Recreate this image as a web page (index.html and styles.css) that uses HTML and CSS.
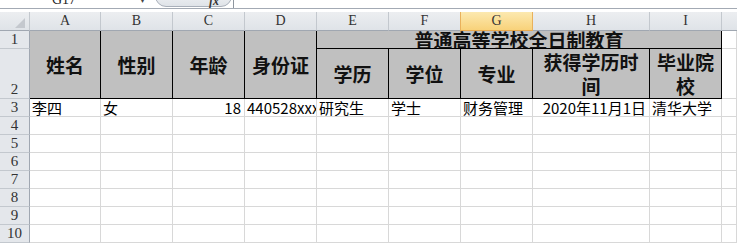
FILE: index.html
```html
<!DOCTYPE html>
<html lang="zh-CN">

<head>
    <meta charset="UTF-8">
    <title>Sheet1</title>
    <link rel="stylesheet" href="styles.css">
</head>

<body>
    <div class="fbar">
        <div class="namebox">G17</div>
        <div class="nb-drop">&#9662;</div>
        <div class="fx-btn"><span class="fx">fx</span></div>
        <div class="fx-input"></div>
    </div>

    <div class="sheet">
        <!-- column headers -->
        <div class="ch corner"><span class="tri"></span></div>
        <div class="ch">A</div>
        <div class="ch">B</div>
        <div class="ch">C</div>
        <div class="ch">D</div>
        <div class="ch">E</div>
        <div class="ch">F</div>
        <div class="ch sel">G</div>
        <div class="ch">H</div>
        <div class="ch">I</div>
        <div class="ch last"></div>

        <!-- row 1 -->
        <div class="rh">1</div>
        <div class="hd tall">姓名</div>
        <div class="hd tall">性别</div>
        <div class="hd tall">年龄</div>
        <div class="hd tall">身份证</div>
        <div class="hd banner">普通高等学校全日制教育</div>
        <div class="c"></div>

        <!-- row 2 -->
        <div class="rh bottom">2</div>
        <div class="hd">学历</div>
        <div class="hd">学位</div>
        <div class="hd">专业</div>
        <div class="hd">获得学历时<br>间</div>
        <div class="hd">毕业院校</div>
        <div class="c"></div>

        <!-- row 3 -->
        <div class="rh">3</div>
        <div class="c">李四</div>
        <div class="c">女</div>
        <div class="c num">18</div>
        <div class="c">440528xxxxxxxxxxxx</div>
        <div class="c">研究生</div>
        <div class="c">学士</div>
        <div class="c">财务管理</div>
        <div class="c num">2020年11月1日</div>
        <div class="c">清华大学</div>
        <div class="c"></div>

        <div class="rh">4</div>
        <div class="c"></div><div class="c"></div><div class="c"></div><div class="c"></div><div class="c"></div>
        <div class="c"></div><div class="c"></div><div class="c"></div><div class="c"></div><div class="c"></div>

        <div class="rh">5</div>
        <div class="c"></div><div class="c"></div><div class="c"></div><div class="c"></div><div class="c"></div>
        <div class="c"></div><div class="c"></div><div class="c"></div><div class="c"></div><div class="c"></div>

        <div class="rh">6</div>
        <div class="c"></div><div class="c"></div><div class="c"></div><div class="c"></div><div class="c"></div>
        <div class="c"></div><div class="c"></div><div class="c"></div><div class="c"></div><div class="c"></div>

        <div class="rh">7</div>
        <div class="c"></div><div class="c"></div><div class="c"></div><div class="c"></div><div class="c"></div>
        <div class="c"></div><div class="c"></div><div class="c"></div><div class="c"></div><div class="c"></div>

        <div class="rh">8</div>
        <div class="c"></div><div class="c"></div><div class="c"></div><div class="c"></div><div class="c"></div>
        <div class="c"></div><div class="c"></div><div class="c"></div><div class="c"></div><div class="c"></div>

        <div class="rh">9</div>
        <div class="c"></div><div class="c"></div><div class="c"></div><div class="c"></div><div class="c"></div>
        <div class="c"></div><div class="c"></div><div class="c"></div><div class="c"></div><div class="c"></div>

        <div class="rh">10</div>
        <div class="c"></div><div class="c"></div><div class="c"></div><div class="c"></div><div class="c"></div>
        <div class="c"></div><div class="c"></div><div class="c"></div><div class="c"></div><div class="c"></div>
    </div>
</body>

</html>
```

FILE: styles.css
```css
* {
    box-sizing: border-box;
}

body {
    margin: 0;
    background: #fff;
    overflow: hidden;
    font-family: "Noto Sans CJK SC", sans-serif;
}

/* formula bar, only its lower edge is visible */
.fbar {
    display: flex;
    align-items: flex-end;
    height: 9px;
    overflow: hidden;
    border-bottom: 1px solid #a3aab4;
    margin-bottom: 3px;
}

.namebox {
    width: 140px;
    height: 16px;
    line-height: 16px;
    text-align: center;
    font-family: "Liberation Serif", serif;
    font-size: 14px;
    color: #222;
    padding-right: 12px;
}

.nb-drop {
    width: 15px;
    height: 14px;
    line-height: 10px;
    font-size: 10px;
    color: #444;
}

.fx-btn {
    width: 77px;
    height: 22px;
    margin-bottom: 1px;
    border: 1px solid #a9b0ba;
    border-radius: 11px;
    background: linear-gradient(#fafbfc, #dfe3e8);
    text-align: right;
    padding-right: 12px;
}

.fx {
    display: inline-block;
    margin-top: 1px;
    font-family: "Liberation Serif", serif;
    font-style: italic;
    font-weight: bold;
    font-size: 12px;
    color: #333;
}

.fx-input {
    flex: 1;
    height: 14px;
    margin-left: 1px;
    border-left: 1px solid #8e969f;
}

/* grid */
.sheet {
    display: grid;
    grid-template-columns: 30px 71px repeat(6, 72px) 117px 72px 1fr;
    grid-template-rows: 19px 18px 50px repeat(8, 18px);
}

.ch {
    background: linear-gradient(#eceef1, #dfe3e8);
    border-right: 1px solid #c3c8ce;
    border-bottom: 1px solid #a0a7b1;
    font-family: "Liberation Serif", serif;
    font-size: 14px;
    color: #333;
    text-align: center;
    line-height: 18px;
}

.ch.sel {
    background: linear-gradient(#fce9b0, #f8d27a);
    border-left: 1px solid #e9b15c;
    border-right: 1px solid #e9b15c;
    border-bottom: 1px solid #e9a94c;
    margin-left: -1px;
}

.ch.last {
    border-right: none;
}

.corner {
    display: flex;
    align-items: flex-end;
    justify-content: flex-end;
    padding: 0 4px 2px 0;
}

.tri {
    width: 0;
    height: 0;
    border-left: 10px solid transparent;
    border-bottom: 10px solid #c4c8ce;
}

.rh {
    background: #e4e7eb;
    border-right: 1px solid #a0a7b1;
    border-bottom: 1px solid #c3c8ce;
    font-family: "Liberation Serif", serif;
    font-size: 15px;
    color: #333;
    text-align: center;
    line-height: 17px;
}

.rh.bottom {
    display: flex;
    align-items: flex-end;
    justify-content: center;
}

.c {
    border-right: 1px solid #d8d8d8;
    border-bottom: 1px solid #d8d8d8;
    font-size: 15px;
    line-height: 17px;
    color: #000;
    padding: 0 2px;
    white-space: nowrap;
    overflow: hidden;
}

.c.num {
    text-align: right;
    padding-right: 3px;
}

.hd {
    display: flex;
    align-items: center;
    justify-content: center;
    text-align: center;
    background: #c0c0c0;
    border-right: 1px solid #000;
    border-bottom: 1px solid #000;
    font-size: 19px;
    font-weight: bold;
    line-height: 24px;
    color: #111;
    overflow: hidden;
}

.hd.tall {
    grid-row: span 2;
}

.hd.banner {
    grid-column: span 5;
    line-height: 17px;
    align-items: flex-start;
}
```
